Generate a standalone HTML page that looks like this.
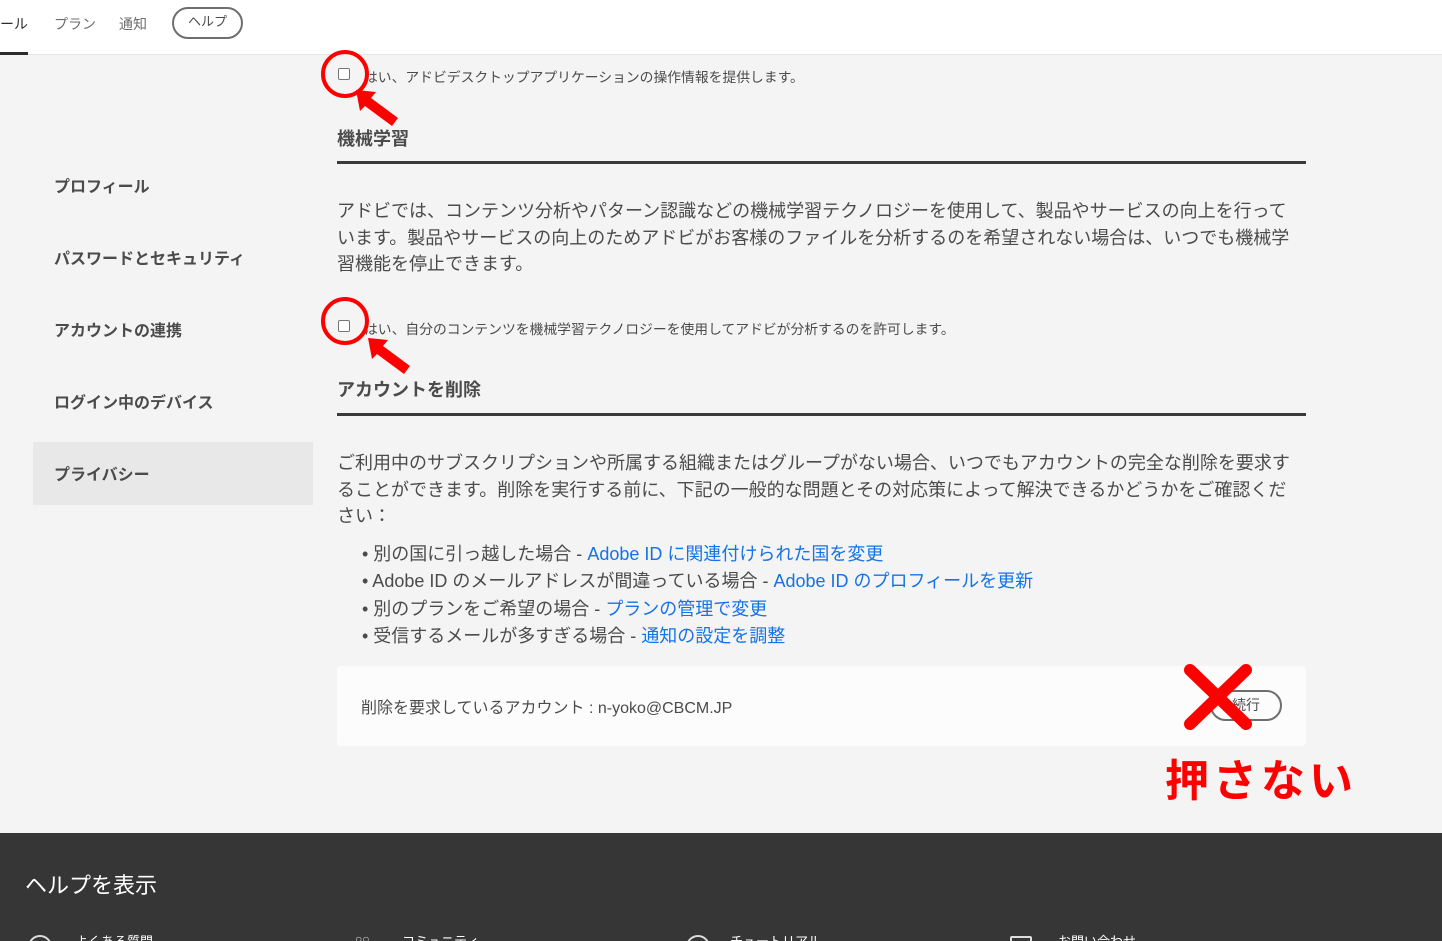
<!DOCTYPE html>
<html><head><meta charset="utf-8"><style>
*{margin:0;padding:0;box-sizing:border-box}
html,body{width:1442px;height:941px;overflow:hidden}
body{background:#f4f4f4;font-family:"Liberation Sans","Noto Sans CJK JP",sans-serif;color:#4b4b4b;position:relative}
.a{position:absolute;white-space:nowrap}
header{position:absolute;left:0;top:0;width:1442px;height:55px;background:#fff;border-bottom:1px solid #e4e4e4}
.cb{position:absolute;width:12px;height:12px;border:1.5px solid #777;border-radius:2px;background:#fff}
.circ{position:absolute;width:48px;height:48px;border:4px solid #f00;border-radius:50%}
.rule{position:absolute;left:337px;width:969px;height:3px;background:#3a3a3a}
.p{position:absolute;left:337px;width:957px;font-size:18px;line-height:26.5px;color:#4b4b4b}
.nav{position:absolute;left:54px;font-size:16px;font-weight:bold;color:#4b4b4b}
.li{position:absolute;left:362px;font-size:18px;white-space:nowrap}
.li a{color:#1473e6;text-decoration:none}
.ft{position:absolute;font-size:13px;color:#fff}
</style></head><body>
<header>
<div class="a" style="left:0;top:14px;font-size:14px;color:#2c2c2c">ール</div>
<div style="position:absolute;left:0;top:52px;width:28px;height:3px;background:#2c2c2c"></div>
<div class="a" style="left:54px;top:14px;font-size:14px;color:#6e6e6e">プラン</div>
<div class="a" style="left:119px;top:14px;font-size:14px;color:#6e6e6e">通知</div>
<div style="position:absolute;left:172px;top:7px;width:71px;height:32px;border:2px solid #6e6e6e;border-radius:16px;font-size:13px;color:#4b4b4b;text-align:center;line-height:26px">ヘルプ</div>
</header>

<div class="nav" style="top:173px">プロフィール</div>
<div class="nav" style="top:245px">パスワードとセキュリティ</div>
<div class="nav" style="top:317px">アカウントの連携</div>
<div class="nav" style="top:389px">ログイン中のデバイス</div>
<div style="position:absolute;left:33px;top:442px;width:280px;height:63px;background:#e8e8e8"></div>
<div class="nav" style="top:461px">プライバシー</div>

<div class="cb" style="left:338px;top:68px"></div>
<div class="a" style="left:364px;top:66px;font-size:13.8px">はい、アドビデスクトップアプリケーションの操作情報を提供します。</div>
<div class="circ" style="left:321px;top:50px"></div>
<svg class="a" style="left:352px;top:86px" width="50" height="42"><polygon points="4,4 24,6 19,12 46,32 40,40 13,20 8,25" fill="#f00"/></svg>

<div class="a" style="left:337px;top:125px;font-size:18px;font-weight:bold">機械学習</div>
<div class="rule" style="top:161px"></div>
<div class="p" style="top:198px">アドビでは、コンテンツ分析やパターン認識などの機械学習テクノロジーを使用して、製品やサービスの向上を行っています。製品やサービスの向上のためアドビがお客様のファイルを分析するのを希望されない場合は、いつでも機械学習機能を停止できます。</div>

<div class="cb" style="left:338px;top:320px"></div>
<div class="a" style="left:364px;top:318px;font-size:13.8px">はい、自分のコンテンツを機械学習テクノロジーを使用してアドビが分析するのを許可します。</div>
<div class="circ" style="left:321px;top:297px"></div>
<svg class="a" style="left:364px;top:334px" width="50" height="42"><polygon points="4,4 24,6 19,12 46,32 40,40 13,20 8,25" fill="#f00"/></svg>

<div class="a" style="left:337px;top:376px;font-size:18px;font-weight:bold">アカウントを削除</div>
<div class="rule" style="top:413px"></div>
<div class="p" style="top:450px">ご利用中のサブスクリプションや所属する組織またはグループがない場合、いつでもアカウントの完全な削除を要求することができます。削除を実行する前に、下記の一般的な問題とその対応策によって解決できるかどうかをご確認ください：</div>
<div class="li" style="top:540px">• 別の国に引っ越した場合 - <a>Adobe ID に関連付けられた国を変更</a></div>
<div class="li" style="top:567px">• Adobe ID のメールアドレスが間違っている場合 - <a>Adobe ID のプロフィールを更新</a></div>
<div class="li" style="top:595px">• 別のプランをご希望の場合 - <a>プランの管理で変更</a></div>
<div class="li" style="top:622px">• 受信するメールが多すぎる場合 - <a>通知の設定を調整</a></div>

<div style="position:absolute;left:337px;top:666px;width:969px;height:80px;background:#fcfcfc;border-radius:4px"></div>
<div class="a" style="left:361px;top:694px;font-size:16px">削除を要求しているアカウント : n-yoko@CBCM.JP</div>
<div style="position:absolute;left:1210px;top:690px;width:72px;height:31px;border:2px solid #6e6e6e;border-radius:16px;font-size:14px;text-align:right;padding-right:20px;line-height:27px">続行</div>
<svg class="a" style="left:1180px;top:662px" width="76" height="70"><path d="M10 8L66 62M66 8L10 62" stroke="#f00" stroke-width="12" stroke-linecap="round"/></svg>
<div class="a" style="left:1165px;top:745px;font-size:44px;font-weight:bold;color:#f00;letter-spacing:4px">押さない</div>

<div style="position:absolute;left:0;top:833px;width:1442px;height:108px;background:#363636;overflow:hidden">
<div class="a" style="left:25px;top:35px;font-size:22px;color:#fff">ヘルプを表示</div>
<div class="ft" style="left:75px;top:98px">よくある質問</div>
<div class="ft" style="left:402px;top:98px">コミュニティ</div>
<div class="ft" style="left:730px;top:98px">チュートリアル</div>
<div class="ft" style="left:1058px;top:98px">お問い合わせ</div>
<div style="position:absolute;left:28px;top:102px;width:24px;height:24px;border:2px solid #ddd;border-radius:50%"></div>
<div style="position:absolute;left:686px;top:102px;width:24px;height:24px;border:2px solid #ddd;border-radius:50%"></div>
<div style="position:absolute;left:1010px;top:103px;width:22px;height:16px;border:2px solid #ddd;border-radius:2px"></div>
<div class="a" style="left:355px;top:99px;font-size:12px;color:#ddd">○○</div>
</div>
</body></html>
